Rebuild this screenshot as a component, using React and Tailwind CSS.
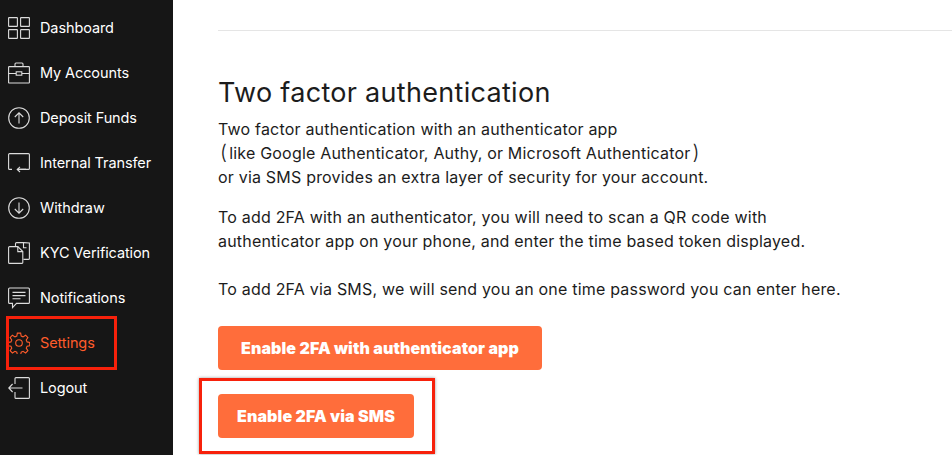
import React from 'react'

const DashIcon = () => (
  <svg viewBox="0 0 22 22" className="w-[22px] h-[22px]" fill="none" stroke="currentColor" strokeWidth="1.1">
    <rect x="0.6" y="0.6" width="8.8" height="8.8" rx="0.5" />
    <rect x="12.6" y="0.6" width="8.8" height="8.8" rx="0.5" />
    <rect x="0.6" y="12.6" width="8.8" height="8.8" rx="0.5" />
    <rect x="12.6" y="12.6" width="8.8" height="8.8" rx="0.5" />
  </svg>
)

const CaseIcon = () => (
  <svg viewBox="0 0 22 22" className="w-[22px] h-[22px]" fill="none" stroke="currentColor" strokeWidth="1.1">
    <rect x="0.6" y="4.6" width="20.8" height="16.4" rx="0.6" />
    <path d="M7 4.6V2a1 1 0 0 1 1-1h6a1 1 0 0 1 1 1v2.6" />
    <path d="M0.6 11.5H8M14 11.5h7.4" />
    <rect x="8.2" y="9.8" width="5.6" height="3.4" />
  </svg>
)

const CircleArrow = ({ up }) => (
  <svg viewBox="0 0 22 22" className="w-[22px] h-[22px]" fill="none" stroke="currentColor" strokeWidth="1.1">
    <circle cx="11" cy="11" r="10.3" />
    {up ? <path d="M11 16.5V5.8M6.8 10 11 5.8 15.2 10" /> : <path d="M11 5.5v10.7M6.8 12 11 16.2 15.2 12" />}
  </svg>
)

const TransferIcon = () => (
  <svg viewBox="0 0 22 22" className="w-[22px] h-[22px]" fill="none" stroke="currentColor" strokeWidth="1.1">
    <path d="M4 17.4H1.6a1 1 0 0 1-1-1V2.6a1 1 0 0 1 1-1h18.8a1 1 0 0 1 1 1v13.8a1 1 0 0 1-1 1H9.5" />
    <path d="M9.5 17.4H18M12 14.8l-2.8 2.6 2.8 2.6" />
  </svg>
)

const DocIcon = () => (
  <svg viewBox="0 0 22 22" className="w-[22px] h-[22px]" fill="none" stroke="currentColor" strokeWidth="1.1">
    <path d="M1.6 4.6h8.2l5 5v11a0.8 0.8 0 0 1-.8.8H1.6a1 1 0 0 1-1-1V5.6a1 1 0 0 1 1-1z" />
    <path d="M9.8 4.6v5h5" />
    <path d="M7.5 4.5V1.6a1 1 0 0 1 1-1h7l5.9 0.3v15.5a1 1 0 0 1-1 1h-5" />
    <path d="M15.5 0.8v5h3" />
  </svg>
)

const ChatIcon = () => (
  <svg viewBox="0 0 22 22" className="w-[22px] h-[22px]" fill="none" stroke="currentColor" strokeWidth="1.1">
    <path d="M1.6 1h18.8a1 1 0 0 1 1 1v13.4a1 1 0 0 1-1 1H8.5L4.5 20.6v-4.2H1.6a1 1 0 0 1-1-1V2a1 1 0 0 1 1-1z" />
    <path d="M4.5 5.4h13M4.5 8.6h13M4.5 11.8h8" />
  </svg>
)

const GearIcon = () => (
  <svg viewBox="0 0 24 24" className="w-[22px] h-[22px]" fill="none" stroke="currentColor" strokeWidth="1.2">
    <circle cx="12" cy="12" r="3.6" />
    <path d="M10.2 1.2h3.6l.6 3.2 2 .9 2.8-1.8 2.5 2.5-1.8 2.8.9 2 2.9.6v3.6l-2.9.6-.9 2 1.8 2.8-2.5 2.5-2.8-1.8-2 .9-.6 2.9h-3.6l-.6-2.9-2-.9-2.8 1.8-2.5-2.5 1.8-2.8-.9-2-2.9-.6v-3.6l2.9-.6.9-2-1.8-2.8 2.5-2.5 2.8 1.8 2-.9z" />
  </svg>
)

const LogoutIcon = () => (
  <svg viewBox="0 0 22 22" className="w-[22px] h-[22px]" fill="none" stroke="currentColor" strokeWidth="1.1">
    <path d="M7 7V1.6a1 1 0 0 1 1-1h12.4a1 1 0 0 1 1 1v18.8a1 1 0 0 1-1 1H8a1 1 0 0 1-1-1V15" />
    <path d="M14.5 11H0.8M4.6 7 0.8 11l3.8 4" />
  </svg>
)

const menu = [
  { label: 'Dashboard', icon: <DashIcon /> },
  { label: 'My Accounts', icon: <CaseIcon /> },
  { label: 'Deposit Funds', icon: <CircleArrow up /> },
  { label: 'Internal Transfer', icon: <TransferIcon /> },
  { label: 'Withdraw', icon: <CircleArrow /> },
  { label: 'KYC Verification', icon: <DocIcon /> },
  { label: 'Notifications', icon: <ChatIcon /> },
  { label: 'Settings', icon: <GearIcon />, active: true },
  { label: 'Logout', icon: <LogoutIcon /> },
]

const App = () => {
  return (
    <div className="relative flex w-[952px] h-[455px] overflow-hidden bg-white font-['Inter',sans-serif]">
      <aside className="w-[173px] h-full shrink-0 bg-[#161616] pt-[5px] pl-2">
        {menu.map((item) => (
          <div
            key={item.label}
            className={`flex items-center h-[45px] gap-2.5 text-[14.5px] tracking-[-0.1px] ${item.active ? 'text-[#ff5c2b]' : 'text-white'}`}
          >
            <span className={item.active ? 'text-[#ff5c2b]' : 'text-[#dcdcdc]'}>{item.icon}</span>
            <span>{item.label}</span>
          </div>
        ))}
      </aside>

      <main className="flex-1 pl-[45px] pt-[30px] text-[#1c1c1c]">
        <hr className="border-t border-[#e5e5e5]" />
        <h1 className="mt-[43px] text-[27px] leading-[38px] tracking-[0.3px]">Two factor authentication</h1>
        <p className="mt-[5px] text-[16px] leading-6 tracking-[0.2px]">
          Two factor authentication with an authenticator app
          <br />
          <span className="ml-[2px] mr-[2px] text-[20px] leading-none font-light">(</span>like Google Authenticator, Authy, or Microsoft Authenticator<span className="ml-[2px] text-[20px] leading-none font-light">)</span>
          <br />
          or via SMS provides an extra layer of security for your account.
        </p>
        <p className="mt-[16px] text-[16px] leading-6 tracking-[0.2px]">
          To add 2FA with an authenticator, you will need to scan a QR code with
          <br />
          authenticator app on your phone, and enter the time based token displayed.
        </p>
        <p className="mt-[24px] text-[16px] leading-6 tracking-[0.2px]">
          To add 2FA via SMS, we will send you an one time password you can enter here.
        </p>
        <div className="mt-[25px] flex flex-col items-start gap-6">
          <button className="h-11 w-[324px] rounded bg-[#ff6d3b] text-[16px] font-black tracking-[0.1px] text-white">
            Enable 2FA with authenticator app
          </button>
          <button className="h-11 w-[196px] rounded bg-[#ff6d3b] text-[16px] font-black tracking-[0.1px] text-white">
            Enable 2FA via SMS
          </button>
        </div>
      </main>

      {/* red highlight boxes from the screenshot */}
      <div className="absolute left-[6px] top-[316px] w-[111px] h-[54px] border-[3px] border-[#f7210b]" />
      <div className="absolute left-[199px] top-[378px] w-[236px] h-[76px] border-[3px] border-[#f7210b] shadow-[0_0_3px_rgba(0,0,0,0.4)]" />
    </div>
  )
}

export default App
